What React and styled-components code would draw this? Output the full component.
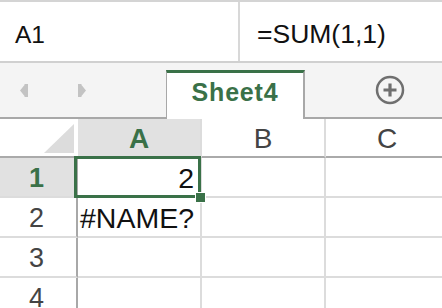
import React from 'react';
import styled, {createGlobalStyle} from 'styled-components';

const GREEN = '#3a7148';

const Global = createGlobalStyle`
  html, body {
    margin: 0;
    padding: 0;
    background: #fff;
    font-family: "Liberation Sans", Arial, sans-serif;
  }
`;

const Page = styled.div`
  width: 442px;
  height: 308px;
  overflow: hidden;
  background: #fff;
`;

const FormulaBar = styled.div`
  display: flex;
  height: 63px;
  box-sizing: border-box;
  border-top: 2px solid #d4d4d4;
  border-bottom: 2px solid #d0d0d0;
`;

const NameBox = styled.div`
  width: 240px;
  box-sizing: border-box;
  border-right: 2px solid #d8d8d8;
  padding: 6px 0 0 15px;
  display: flex;
  align-items: center;
  font-size: 24.5px;
  color: #111;
`;

const FormulaText = styled.div`
  flex: 1;
  padding: 6px 0 0 17px;
  display: flex;
  align-items: center;
  font-size: 26.5px;
  color: #111;
`;

const TabBar = styled.div`
  display: flex;
  align-items: flex-end;
  height: 56px;
  box-sizing: border-box;
  background: #f4f4f4;
  border-bottom: 2px solid #a8a8a8;
`;

const NavButtons = styled.div`
  width: 166px;
  align-self: stretch;
  display: flex;
  align-items: center;
  gap: 50px;
  padding: 0 0 0 20px;
  box-sizing: border-box;
`;

const Tab = styled.div`
  width: 139px;
  height: 49px;
  margin-bottom: -2px;
  box-sizing: border-box;
  background: #fff;
  border-top: 3px solid ${GREEN};
  border-left: 1px solid #a8a8a8;
  border-right: 2px solid #a8a8a8;
  display: flex;
  justify-content: center;
  padding-top: 5px;
  font-size: 25px;
  font-weight: bold;
  letter-spacing: 0.8px;
  color: ${GREEN};
`;

const AddButton = styled.div`
  align-self: stretch;
  display: flex;
  align-items: center;
  margin-left: 70px;
`;

const Grid = styled.div`
  display: grid;
  grid-template-columns: 78px 124px 124px 124px;
  grid-template-rows: 39px repeat(4, 40px);
`;

const Corner = styled.div`
  box-sizing: border-box;
  border-right: 4px solid #fff;
  border-bottom: 2px solid #aaa;
  display: flex;
  align-items: flex-end;
  justify-content: flex-end;
  padding: 0 0 3px 0;
`;

const ColHeader = styled.div`
  box-sizing: border-box;
  background: ${p => (p.$active ? '#e1e1e1' : '#fff')};
  border-bottom: 2px solid #aaa;
  border-right: 2px solid #dcdcdc;
  display: flex;
  align-items: center;
  justify-content: center;
  padding-top: 2px;
  font-size: 28px;
  font-weight: ${p => (p.$active ? 'bold' : 'normal')};
  color: ${p => (p.$active ? GREEN : '#444')};
`;

const RowHeader = styled.div`
  box-sizing: border-box;
  background: ${p => (p.$active ? '#e1e1e1' : '#fff')};
  border-right: 2px solid #a8a8a8;
  border-bottom: 2px solid #dcdcdc;
  display: flex;
  align-items: center;
  justify-content: center;
  padding: 2px 3px 0 0;
  font-size: 27px;
  font-weight: ${p => (p.$active ? 'bold' : 'normal')};
  color: ${p => (p.$active ? GREEN : '#444')};
`;

const Cell = styled.div`
  position: relative;
  box-sizing: border-box;
  border-right: 2px solid #dcdcdc;
  border-bottom: 2px solid #dcdcdc;
  display: flex;
  align-items: center;
  justify-content: ${p => (p.$right ? 'flex-end' : 'flex-start')};
  padding: 2px 6px 0 2px;
  font-size: 28.5px;
  color: #111;
`;

const Selection = styled.div`
  position: absolute;
  z-index: 2;
  left: -4px;
  top: -2px;
  right: -1px;
  bottom: -2px;
  border: 3px solid ${GREEN};
  pointer-events: none;
`;

const FillHandle = styled.div`
  position: absolute;
  right: -7px;
  bottom: -7px;
  width: 9px;
  height: 9px;
  background: ${GREEN};
  box-shadow: 0 0 0 1px #fff;
`;

const Arrow = ({flip}) => (
  <svg width="8" height="13" viewBox="0 0 8 13" style={flip ? {transform: 'scaleX(-1)'} : undefined}>
    <polygon points="0,6.5 4.5,1 4.5,0 8,0 8,13 4.5,13 4.5,12" fill="#c3c3c3" />
  </svg>
);

const PlusCircle = () => (
  <svg width="30" height="30" viewBox="0 0 30 30">
    <circle cx="15" cy="15" r="13" fill="none" stroke="#6f6f6f" strokeWidth="2.5" />
    <path d="M15 8.5v13M8.5 15h13" stroke="#6f6f6f" strokeWidth="3.2" />
  </svg>
);

const CornerTriangle = () => (
  <svg width="30" height="29" viewBox="0 0 30 29">
    <polygon points="30,0 30,29 0,29" fill="#dcdcdc" />
  </svg>
);

const cols = ['A', 'B', 'C'];
const rows = [
  {n: 1, cells: ['2', '', '']},
  {n: 2, cells: ['#NAME?', '', '']},
  {n: 3, cells: ['', '', '']},
  {n: 4, cells: ['', '', '']},
];

export default function App () {
  return (
    <Page>
      <Global />
      <FormulaBar>
        <NameBox>A1</NameBox>
        <FormulaText>=SUM(1,1)</FormulaText>
      </FormulaBar>
      <TabBar>
        <NavButtons>
          <Arrow />
          <Arrow flip />
        </NavButtons>
        <Tab>Sheet4</Tab>
        <AddButton><PlusCircle /></AddButton>
      </TabBar>
      <Grid>
        <Corner><CornerTriangle /></Corner>
        {cols.map (c => (
          <ColHeader key={c} $active={c === 'A'}>{c}</ColHeader>
        ))}
        {rows.map (r => (
          <React.Fragment key={r.n}>
            <RowHeader $active={r.n === 1}>{r.n}</RowHeader>
            {r.cells.map ((v, i) => (
              <Cell key={i} $right={r.n === 1 && i === 0}>
                {v}
                {r.n === 1 && i === 0 &&
                  <Selection><FillHandle /></Selection>}
              </Cell>
            ))}
          </React.Fragment>
        ))}
      </Grid>
    </Page>
  );
}
